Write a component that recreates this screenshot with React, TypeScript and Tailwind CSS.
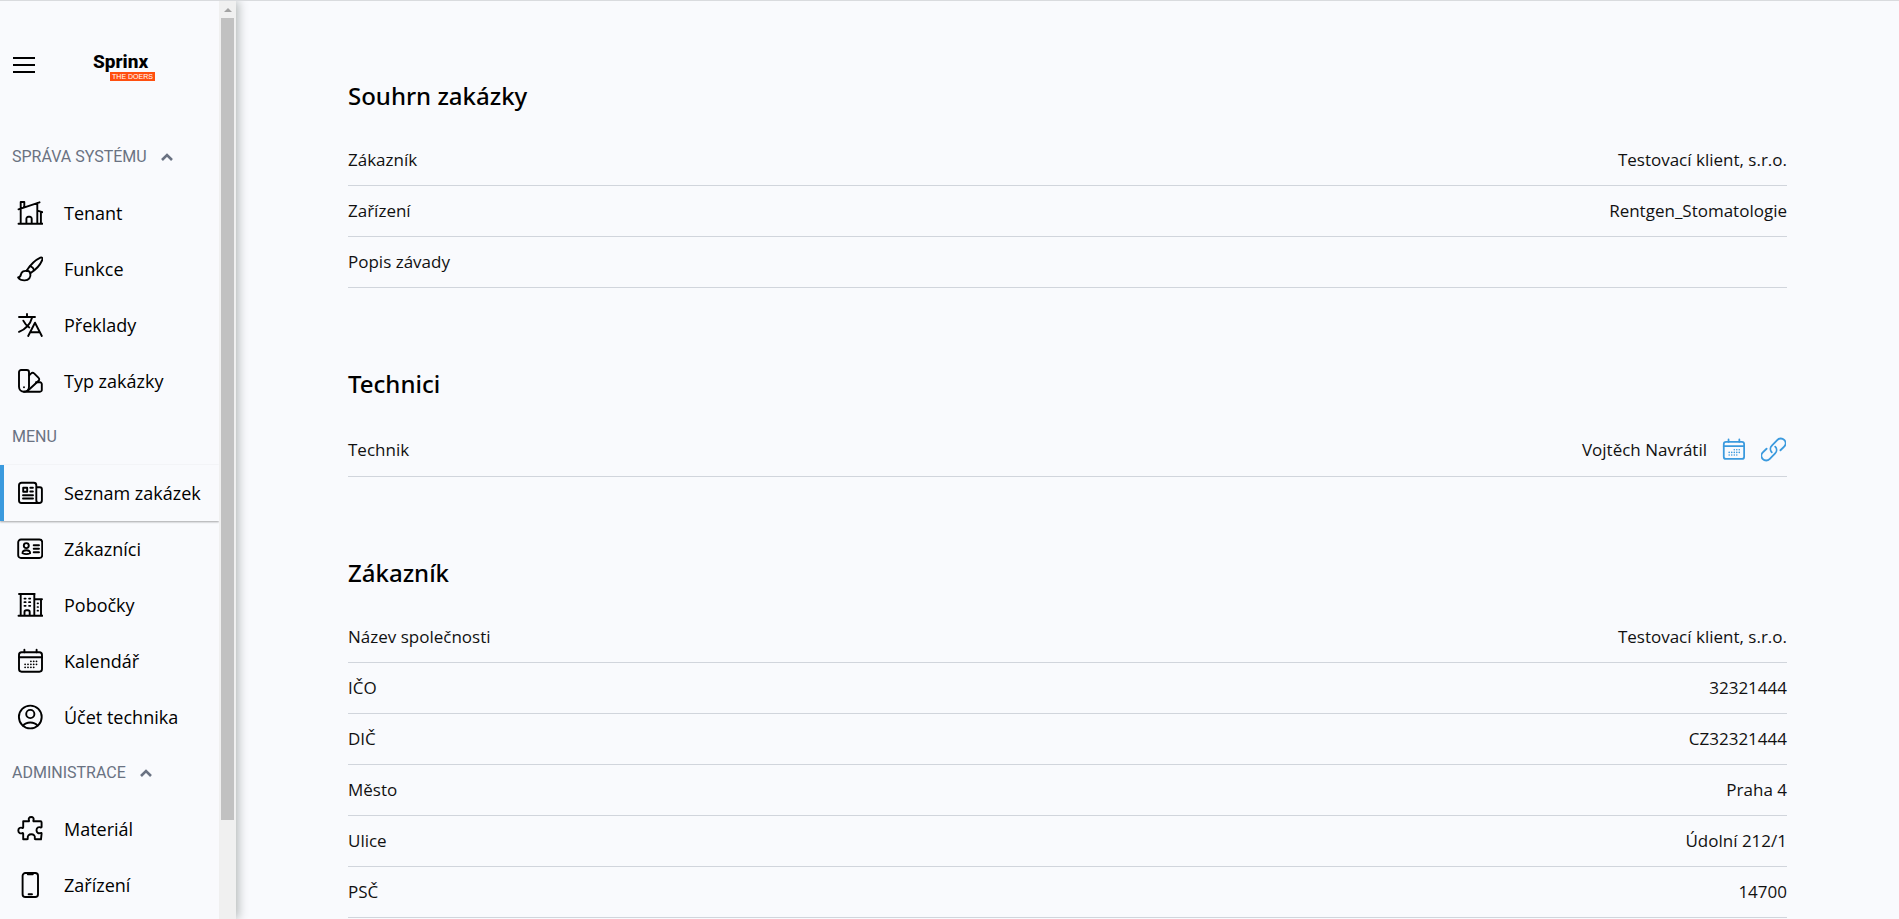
import { useState } from "react"
import type { ReactNode } from "react"
import clsx from "clsx"

type IconProps = {
  className?: string
  strokeWidth?: number
  children?: ReactNode
}

const Icon = ({ className = "size-[26px]", strokeWidth = 1.9, children }: IconProps) => (
  <svg
    viewBox="0 0 26 26"
    className={clsx("shrink-0", className)}
    fill="none"
    stroke="currentColor"
    strokeWidth={strokeWidth}
    strokeLinecap="round"
    strokeLinejoin="round"
    aria-hidden="true"
  >
    {children}
  </svg>
)

const HouseIcon = () => (
  <Icon>
    <path d="M1.5 23.7h24M3.7 9v14.7M1.5 9.3l21-7M3.7 8V2h3.6v5M20.3 3v20.7M20.3 10.7l5.2 1.5M23.9 12v11.7M9.4 23.5v-4.8a1.9 1.9 0 0 1 1.9-1.9h1.5a1.9 1.9 0 0 1 1.9 1.9v4.8" />
  </Icon>
)

const BrushIcon = () => (
  <Icon>
    <path d="M9.6 14.7C13 9.500 18.500 4 23.400 1.700c1.500-.7 2.600.4 2 2-2 5-6.900 10.300-12.100 13.500" />
    <path d="M13.200 10.200c1.900.6 3.300 1.900 3.900 3.900" />
    <path d="M9.600 14.700c2 .2 3.500 1.200 3.700 2.500M10 15.100c-2.800-.8-5.500.6-6 3.100-.3 1.600-.6 3-2.900 3.300 1.600 2.300 4 3 6.600 2.900 4-.2 6.500-3 5.600-7.200" />
  </Icon>
)

const TranslateIcon = () => (
  <Icon>
    <path d="M2 5h16M10 2v3M15.2 5.2C13.5 11.5 9 17 2 19.8M6.3 8.7c1.3 2.8 3.3 5 6 6.8" />
    <path d="M11.2 24 18 10.7 24.8 24M13.2 20.3h9.7" />
  </Icon>
)

const SwatchIcon = () => (
  <Icon>
    <path d="M4.2 2h5.6A2.2 2.2 0 0 1 12 4.2v14.5a5 5 0 0 1-10 0V4.200A2.200 2.200 0 0 1 4.200 2Z" />
    <path d="m12.2 7.4 2-2a2 2 0 0 1 2.900 0l4.500 4.500a2 2 0 0 1 0 2.900L11 22.500" />
    <path d="M19 14.3h4a1.800 1.800 0 0 1 1.800 1.800v5.800a1.800 1.800 0 0 1-1.800 1.800H7" />
    <path d="M7 19.3v.01" />
  </Icon>
)

const NewsIcon = () => (
  <Icon>
    <path d="M22.3 23H4.5A2.5 2.5 0 0 1 2 20.5V5.2a2.5 2.5 0 0 1 2.5-2.5h12.300a2.500 2.500 0 0 1 2.500 2.500v15a2.800 2.800 0 0 0 5.600 0V9.300a2 2 0 0 0-2-2h-3.600" />
    <path d="M6.2 7.7h4v4h-4zM13.3 7.7h2.6M13.3 11.5h2.6M6 15.2h10M6 18.5h10" />
  </Icon>
)

const IdCardIcon = () => (
  <Icon>
    <rect x="1.2" y="3.5" width="24" height="18.5" rx="2.8" />
    <circle cx="9.3" cy="9.6" r="2.5" />
    <path d="M5.5 17.2c0-1.8 1.7-2.9 3.8-2.9s3.800 1.100 3.800 2.900c-2 1-5.600 1-7.600 0ZM16.700 9.300H22M16.700 12.800H22M16.700 16.300H22" />
  </Icon>
)

const BuildingIcon = () => (
  <Icon>
    <path d="M1.5 23.7h24M3.7 2v21.7M2 2h15.7M17.3 2v21.7M17.3 7.3H25M24 7.3v16.4M7.5 23.5V20a1.800 1.800 0 0 1 1.800-1.800h1.600a1.800 1.800 0 0 1 1.800 1.800v3.500" />
    <path
      d="M7.4 6.6h1.3M12 6.6h1.3M7.4 10.2h1.3M12 10.2h1.3M7.4 13.8h1.3M12 13.8h1.3M20.5 11.3h.6M20.5 15h.6M20.5 18.7h.6"
      strokeWidth="1.7"
    />
  </Icon>
)

type CalendarIconProps = {
  className?: string
  strokeWidth?: number
}

const CalendarIcon = ({ className, strokeWidth }: CalendarIconProps) => (
  <Icon className={className} strokeWidth={strokeWidth}>
    <rect x="2" y="4.3" width="23" height="19.4" rx="2.6" />
    <path d="M2 9.3h23M7.4 1.7v2.6M19.6 1.7v2.6" />
    <path
      d="M13.9 13.3h.01M16.7 13.3h.01M19.5 13.3h.01M8.1 16.3h.01M11 16.3h.01M13.9 16.3h.01M16.7 16.3h.01M19.5 16.3h.01M8.1 19.3h.01M11 19.3h.01M13.9 19.3h.01M16.7 19.3h.01"
      strokeWidth="1.8"
    />
  </Icon>
)

const AccountIcon = () => (
  <Icon>
    <circle cx="13.3" cy="13" r="11.4" />
    <circle cx="13.3" cy="10" r="4.1" />
    <path d="M6 21.7c1.6-2 4.3-3.2 7.3-3.2s5.7 1.2 7.3 3.2" />
  </Icon>
)

const PuzzleIcon = () => (
  <Icon>
    <path d="M6.2 5.3h5.200c.7 0 .8-.5.600-1-.9-1.700.3-3.300 2.200-3.300s3.100 1.600 2.200 3.300c-.2.500-.1 1 .6 1h6.400a1.200 1.200 0 0 1 1.200 1.200v4.300c0 .7-.5.900-1.100.6-1.900-.9-4 .4-4 2.800s2.100 3.700 4 2.800c.6-.3 1.100-.1 1.100.6l-.6 5.700h-5.400c-.8 0-1-.5-.8-1.100.5-2.100-1-3.900-3.500-3.900s-4 1.800-3.500 3.900c.2.600 0 1.100-.8 1.100H6.200v-5.600c0-.7-.5-.9-1-.6-1.900.9-3.900-.4-3.900-2.600s2-3.500 3.900-2.600c.5.300 1 .1 1-.6V5.300Z" />
  </Icon>
)

const PhoneIcon = () => (
  <Icon>
    <rect x="5.6" y="1" width="15.4" height="24" rx="2.8" />
    <path d="M10.8 2.3h5M11.6 22.3h3.4" />
  </Icon>
)

const LinkIcon = ({ className }: { className?: string }) => (
  <Icon className={className} strokeWidth={1.9}>
    <path d="M11.2 15.9a5 5 0 0 1 .1-7l5.8-5.9a4.9 4.9 0 0 1 7 0 4.900 4.900 0 0 1 0 6.900l-3.900 3.900" />
    <path d="M14.8 10.1a5 5 0 0 1-.1 7L8.9 23a4.9 4.9 0 0 1-7 0 4.900 4.900 0 0 1 0-6.900l3.900-3.900" />
  </Icon>
)

type MenuItem = {
  label: string
  icon: () => ReactNode
  active?: boolean
}

type MenuGroup = {
  title: string
  collapsible: boolean
  items: MenuItem[]
}

const menu: MenuGroup[] = [
  {
    title: "SPRÁVA SYSTÉMU",
    collapsible: true,
    items: [
      { label: "Tenant", icon: HouseIcon },
      { label: "Funkce", icon: BrushIcon },
      { label: "Překlady", icon: TranslateIcon },
      { label: "Typ zakázky", icon: SwatchIcon },
    ],
  },
  {
    title: "MENU",
    collapsible: false,
    items: [
      { label: "Seznam zakázek", icon: NewsIcon, active: true },
      { label: "Zákazníci", icon: IdCardIcon },
      { label: "Pobočky", icon: BuildingIcon },
      { label: "Kalendář", icon: CalendarIcon },
      { label: "Účet technika", icon: AccountIcon },
    ],
  },
  {
    title: "ADMINISTRACE",
    collapsible: true,
    items: [
      { label: "Materiál", icon: PuzzleIcon },
      { label: "Zařízení", icon: PhoneIcon },
    ],
  },
]

const Logo = () => (
  <a href="#" className="flex flex-col pt-0.5 text-black" aria-label="Sprinx The Doers">
    <span className="font-['Roboto',sans-serif] text-[19px] leading-5 font-extrabold">Sprinx</span>
    <span className="ml-[17px] flex h-[9px] w-[45px] items-center justify-center bg-[#ff4f0f] font-['Liberation_Sans',sans-serif] text-[7px] leading-none text-white">
      THE DOERS
    </span>
  </a>
)

const SidebarGroup = ({ group }: { group: MenuGroup }) => {
  const [open, setOpen] = useState(true)

  return (
    <section>
      {group.collapsible ? (
        <button
          type="button"
          onClick={() => setOpen(!open)}
          aria-expanded={open}
          className="flex h-14 w-full items-center gap-3.5 pl-3 font-['Roboto',sans-serif] text-base text-gray-500"
        >
          {group.title}
          <svg
            viewBox="0 0 12 8"
            className={clsx("h-2 w-3", !open && "rotate-180")}
            fill="none"
            stroke="currentColor"
            strokeWidth="2.6"
            aria-hidden="true"
          >
            <path d="m1 7 5-5 5 5" />
          </svg>
        </button>
      ) : (
        <h2 className="flex h-14 items-center pl-3 font-['Roboto',sans-serif] text-base text-gray-500">
          {group.title}
        </h2>
      )}
      {open &&
        group.items.map(({ label, icon: ItemIcon, active }) => (
          <a
            key={label}
            href="#"
            aria-current={active ? "page" : undefined}
            className={clsx(
              "flex h-14 items-center gap-[21px] border-l-4 pl-[13px] text-lg whitespace-nowrap text-black",
              active
                ? "border-[#3b9ade] shadow-[0_1px_2px_rgba(0,0,0,0.35)]"
                : "border-transparent"
            )}
          >
            <ItemIcon />
            {label}
          </a>
        ))}
    </section>
  )
}

const Sidebar = () => (
  <aside className="z-10 flex w-[236px] shrink-0 shadow-[2px_0_10px_rgba(0,20,10,0.3)]">
    <nav className="min-w-0 flex-1 overflow-hidden bg-[#f9fafd]">
      <div className="flex h-32 items-center gap-14 pl-[13px]">
        <button type="button" aria-label="Menu" className="flex w-6 flex-col gap-[5px]">
          <span className="h-0.5 w-[22px] bg-black" />
          <span className="h-0.5 w-[22px] bg-black" />
          <span className="h-0.5 w-[22px] bg-black" />
        </button>
        <Logo />
      </div>
      {menu.map((group) => (
        <SidebarGroup key={group.title} group={group} />
      ))}
    </nav>
    {/* Scrollbar */}
    <div className="flex w-[17px] flex-col bg-[#f0f0f0]" aria-hidden="true">
      <div className="flex h-[17px] shrink-0 items-center justify-center">
        <svg viewBox="0 0 8 4" className="h-1 w-2 fill-[#a3a3a3]">
          <path d="M4 0 8 4H0Z" />
        </svg>
      </div>
      <div className="min-h-0 flex-1">
        <div className="mx-0.5 h-[89%] bg-[#c1c1c1]" />
      </div>
    </div>
  </aside>
)

type DetailRow = {
  label: string
  value?: ReactNode
}

const DetailSection = ({ title, rows }: { title: string; rows: DetailRow[] }) => (
  <section>
    <h2 className="mb-[23px] font-['Noto_Sans',sans-serif] text-2xl font-medium text-black">
      {title}
    </h2>
    <dl>
      {rows.map(({ label, value }) => (
        <div
          key={label}
          className="flex items-center justify-between border-b border-gray-300 py-[13px] text-[17px] leading-6 text-[#111]"
        >
          <dt>{label}</dt>
          <dd>{value}</dd>
        </div>
      ))}
    </dl>
  </section>
)

const Technician = ({ name }: { name: string }) => (
  <span className="flex items-center gap-[13px]">
    {name}
    <button type="button" aria-label="Kalendář technika" className="p-0.5 text-[#3b9ade]">
      <CalendarIcon className="size-[23px]" strokeWidth={2} />
    </button>
    <a href="#" aria-label="Odkaz na technika" className="p-px text-[#3b9ade]">
      <LinkIcon className="size-[25px]" />
    </a>
  </span>
)

const App = () => (
  <div className="flex h-screen overflow-hidden border-t border-[#d9dbde] bg-[#f9fafd] font-['Open_Sans',sans-serif]">
    <Sidebar />
    <main className="flex min-w-0 flex-1 flex-col gap-20 px-28 pt-[79px]">
      <DetailSection
        title="Souhrn zakázky"
        rows={[
          { label: "Zákazník", value: "Testovací klient, s.r.o." },
          { label: "Zařízení", value: "Rentgen_Stomatologie" },
          { label: "Popis závady" },
        ]}
      />
      <DetailSection
        title="Technici"
        rows={[{ label: "Technik", value: <Technician name="Vojtěch Navrátil" /> }]}
      />
      <DetailSection
        title="Zákazník"
        rows={[
          { label: "Název společnosti", value: "Testovací klient, s.r.o." },
          { label: "IČO", value: "32321444" },
          { label: "DIČ", value: "CZ32321444" },
          { label: "Město", value: "Praha 4" },
          { label: "Ulice", value: "Údolní 212/1" },
          { label: "PSČ", value: "14700" },
        ]}
      />
    </main>
  </div>
)

export default App
